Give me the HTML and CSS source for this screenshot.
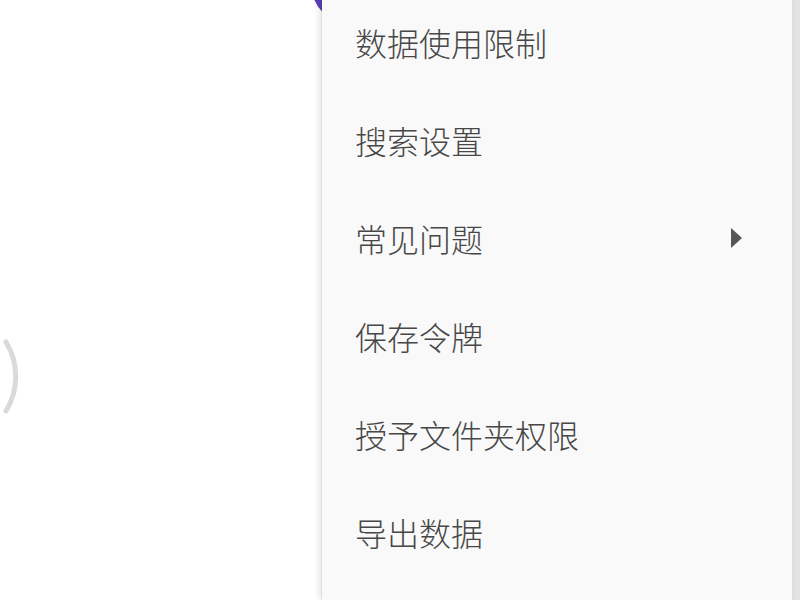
FILE: index.html
```html
<!DOCTYPE html>
<html lang="zh-CN">
<head>
<meta charset="utf-8">
<title>菜单</title>
<link rel="stylesheet" href="styles.css">
</head>
<body>
<div class="screen">
  <div class="backdrop">
    <div class="fab"></div>
    <svg class="spinner" width="24" height="80" viewBox="0 0 24 80">
      <path d="M6 4 A66 66 0 0 1 6 73" fill="none" stroke="#dadada" stroke-width="5" stroke-linecap="round"/>
    </svg>
  </div>
  <div class="menu">
    <ul class="menu-list">
      <li class="menu-item">数据使用限制</li>
      <li class="menu-item">搜索设置</li>
      <li class="menu-item has-sub">常见问题<span class="sub-arrow"></span></li>
      <li class="menu-item">保存令牌</li>
      <li class="menu-item">授予文件夹权限</li>
      <li class="menu-item">导出数据</li>
    </ul>
  </div>
  <div class="edge"></div>
</div>
</body>
</html>
```

FILE: styles.css
```css
html, body {
  margin: 0;
  padding: 0;
  background: #ffffff;
}

body {
  font-family: "Noto Sans CJK SC", "Noto Sans", sans-serif;
}

.screen {
  display: flex;
  width: 800px;
  height: 600px;
  overflow: hidden;
  position: relative;
}

.backdrop {
  width: 322px;
  flex: none;
  position: relative;
  padding-top: 338px;
  box-sizing: border-box;
}

.spinner {
  display: block;
}

.fab {
  position: absolute;
  left: 311px;
  top: -56px;
  width: 80px;
  height: 80px;
  border-radius: 50%;
  background: #5b3fb5;
}

.menu {
  flex: none;
  width: 470px;
  background: #f9f9f9;
  position: relative;
  z-index: 2;
  box-shadow: -3px 0 6px rgba(0, 0, 0, 0.10), -1px 0 1px rgba(0, 0, 0, 0.04);
}

.menu-list {
  list-style: none;
  margin: -7px 0 0 0;
  padding: 0;
}

.menu-item {
  height: 98px;
  display: flex;
  align-items: center;
  padding-left: 33px;
  padding-right: 50px;
  font-size: 32px;
  font-weight: 300;
  color: #474747;
  line-height: 1;
}

.has-sub {
  justify-content: space-between;
}

.sub-arrow {
  width: 0;
  height: 0;
  border-top: 10px solid transparent;
  border-bottom: 10px solid transparent;
  border-left: 11px solid #555555;
}

.edge {
  flex: 1;
  background: linear-gradient(to right, #dcdcdc, #e3e3e3 40%, #e4e4e4);
  position: relative;
  z-index: 3;
}
```
